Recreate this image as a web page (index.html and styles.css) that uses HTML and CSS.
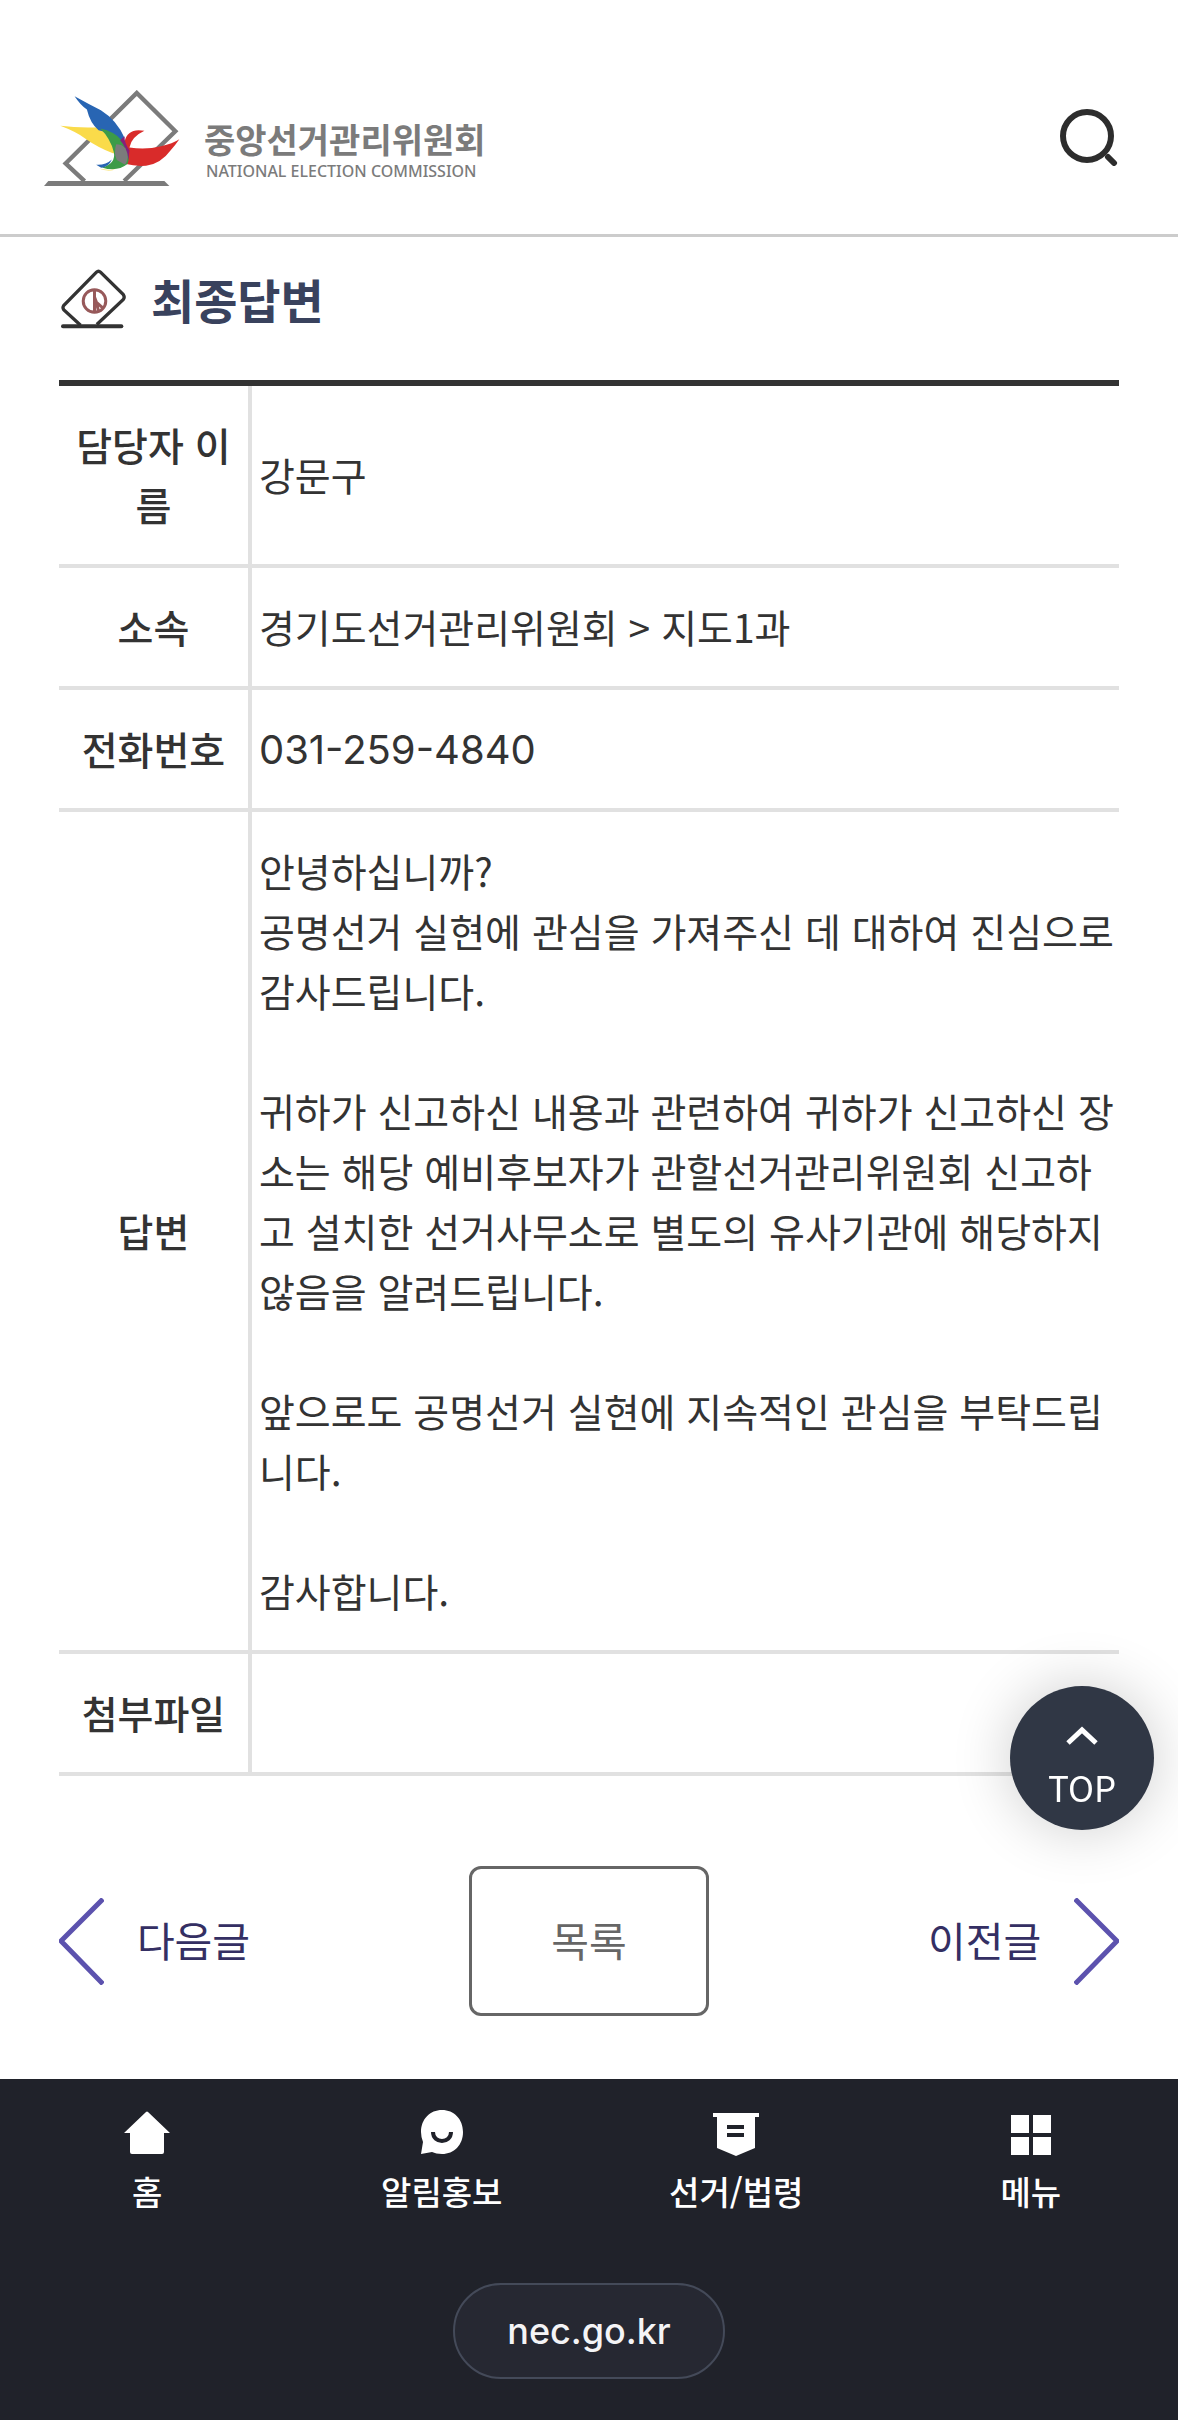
FILE: index.html
```html
<!DOCTYPE html>
<html lang="ko">
  <head>
    <meta charset="UTF-8" />
    <meta name="viewport" content="width=device-width, initial-scale=1.0" />
    <title>최종답변 - 중앙선거관리위원회</title>
    <link rel="stylesheet" href="styles.css">
  </head>
  <body>
    <header class="header">
      <a class="logo" href="#">
        <svg class="logo-mark" viewBox="40 60 415 290" aria-hidden="true">
          <path d="M165 333 L108 280 L322 68 L438 183 L284 333" fill="none" stroke="#7b7b7b" stroke-width="13" />
          <path d="M43 348 L56 333 H405 L420 348 Z" fill="#7b7b7b" />
          <path d="M92 167 Q150 174 212 171 L262 235 L252 250 Q205 232 170 207 Q140 185 92 167 Z" fill="#fadb4a" />
          <path d="M135 78 Q178 102 214 120 Q262 150 285 203 L276 218 Q245 185 207 180 Q182 160 172 118 Q152 104 135 78 Z" fill="#2865b3" />
          <path d="M345 182 Q306 200 300 232 Q350 240 395 228 Q430 220 450 207 Q437 226 424 240 Q395 280 350 287 Q315 289 290 282 L285 215 Q295 172 345 182 Z" fill="#d92b2a" />
          <path d="M212 175 Q255 184 276 210 Q307 250 294 282 Q262 307 217 292 Q260 280 253 246 Q243 205 212 175 Z" fill="#3c9b48" />
          <path d="M200 284 Q228 286 247 268 Q238 290 215 293 Z" fill="#2865b3" />
          <path d="M208 295 Q235 302 258 298 Q235 306 208 295 Z" fill="#fadb4a" />
          <path d="M272 210 L285 198 Q285 220 300 240 L297 270 Q292 232 272 210 Z" fill="#86207b" />
          <path d="M260 222 Q252 248 262 270 L287 284 Q302 262 288 235 Q278 222 260 222 Z" fill="#7b7b7b" />
        </svg>
        <span class="logo-text">
          <span class="logo-ko">중앙선거관리위원회</span>
          <span class="logo-en">NATIONAL ELECTION COMMISSION</span>
        </span>
      </a>
      <button class="search-button" type="button" aria-label="검색">
        <svg viewBox="0 0 58 58" aria-hidden="true">
          <circle cx="27" cy="28" r="24" fill="none" stroke="#2d2d2d" stroke-width="6" />
          <path d="M48 49 L54 55" stroke="#2d2d2d" stroke-width="6" stroke-linecap="round" />
        </svg>
      </button>
    </header>

    <main class="container">
      <div class="title-row">
        <svg class="title-icon" viewBox="93 55 196 180" aria-hidden="true">
          <path d="M152 224 L101 177 Q97 171 101 165 L200 64 Q206 58 212 64 L281 132 Q286 139 281 146 L201 222" fill="none" stroke="#333" stroke-width="10" />
          <path d="M99 227 H275" stroke="#333" stroke-width="12" stroke-linecap="round" />
          <g fill="none" stroke="#97595a" stroke-width="9">
            <circle cx="194" cy="151" r="34" />
            <path d="M194 117 V185 M194 139 L200 155 L219 172 M200 155 L206 182" />
          </g>
        </svg>
        <h1 class="title">최종답변</h1>
      </div>

      <table class="answer-table">
        <tr>
          <th scope="row">담당자 이름</th>
          <td>강문구</td>
        </tr>
        <tr>
          <th scope="row">소속</th>
          <td>경기도선거관리위원회 &gt; 지도1과</td>
        </tr>
        <tr>
          <th scope="row">전화번호</th>
          <td class="phone">031-259-4840</td>
        </tr>
        <tr>
          <th scope="row">답변</th>
          <td>
            안녕하십니까?<br>
            공명선거 실현에 관심을 가져주신 데 대하여 진심으로 감사드립니다.<br>
            <br>
            귀하가 신고하신 내용과 관련하여 귀하가 신고하신 장소는 해당 예비후보자가 관할선거관리위원회 신고하고 설치한 선거사무소로 별도의 유사기관에 해당하지 않음을 알려드립니다.<br>
            <br>
            앞으로도 공명선거 실현에 지속적인 관심을 부탁드립니다.<br>
            <br>
            감사합니다.
          </td>
        </tr>
        <tr>
          <th scope="row">첨부파일</th>
          <td></td>
        </tr>
      </table>

      <nav class="pager" aria-label="글 이동">
        <a class="pager-link" href="#">
          <svg viewBox="0 0 45 87" aria-hidden="true"><path d="M44 1 L2 43 L44 86" /></svg>
          <span>다음글</span>
        </a>
        <button class="list-button" type="button">목록</button>
        <a class="pager-link next" href="#">
          <span>이전글</span>
          <svg viewBox="0 0 45 87" aria-hidden="true"><path d="M1 1 L43 43 L1 86" /></svg>
        </a>
      </nav>
    </main>

    <button class="top-button" type="button">
      <svg viewBox="0 0 32 20" aria-hidden="true"><path d="M2 17 L16 4 L30 17" /></svg>
      TOP
    </button>

    <footer class="bottom">
      <nav class="tabs" aria-label="하단 메뉴">
        <a class="tab" href="#">
          <svg viewBox="0 0 48 48" aria-hidden="true">
            <path d="M23 4 Q24 3 25 4 L47 25 H41 V44 Q41 46 39 46 H9 Q7 46 7 44 V25 H1 Z" fill="#fff" />
          </svg>
          홈
        </a>
        <a class="tab" href="#">
          <svg viewBox="0 0 48 48" aria-hidden="true">
            <path d="M24 2 C36 2 45 11 45 24 C45 37 36 46 24 46 Q18 46 14 44 L3 46 L5 34 Q3 29 3 24 C3 11 12 2 24 2 Z" fill="#fff" />
            <path d="M15 24 C15 36 33 36 33 24" fill="none" stroke="#20222a" stroke-width="4" />
          </svg>
          알림홍보
        </a>
        <a class="tab" href="#">
          <svg viewBox="0 0 48 48" aria-hidden="true">
            <path d="M1 5 H47 V9 H43 V40 L24 48 L5 40 V9 H1 Z" fill="#fff" />
            <path d="M15 19 H32 M15 27 H32" stroke="#20222a" stroke-width="4" />
          </svg>
          선거/법령
        </a>
        <a class="tab" href="#">
          <svg viewBox="0 0 48 48" aria-hidden="true">
            <path d="M4 7 H22 V25 H4 Z M26 7 H44 V25 H26 Z M4 29 H22 V47 H4 Z M26 29 H44 V47 H26 Z" fill="#fff" />
          </svg>
          메뉴
        </a>
      </nav>
      <a class="address" href="#">nec.go.kr</a>
    </footer>
  </body>
</html>
```

FILE: styles.css
```css
* {
  box-sizing: border-box;
}

body {
  margin: 0;
  background-color: #fff;
  color: #333;
  font-family: "Noto Sans CJK KR", sans-serif;
  font-size: 39px;
  line-height: 60px;
}

a {
  color: inherit;
  text-decoration: none;
}

button {
  padding: 0;
  border: none;
  background: none;
  font-family: inherit;
  cursor: pointer;
}

svg {
  display: block;
  flex: none;
}

.header {
  display: flex;
  align-items: flex-start;
  justify-content: space-between;
  padding: 90px 60px 47px 43px;
  border-bottom: 3px solid #ccc;
}

.logo {
  display: flex;
  gap: 23px;
  color: #7b7b7b;
}

.logo-mark {
  width: 138px;
  height: 97px;
}

.logo-text {
  display: flex;
  flex-direction: column;
  padding-top: 28px;
}

.logo-ko {
  font-size: 34px;
  font-weight: bold;
  line-height: 42px;
}

.logo-en {
  padding-left: 2px;
  font-family: "Noto Sans", sans-serif;
  font-size: 16px;
  font-weight: 500;
  line-height: 22px;
}

.search-button {
  margin-top: 18px;
}

.search-button svg {
  width: 58px;
  height: 58px;
}

.container {
  padding: 0 5%;
}

.title-row {
  display: flex;
  align-items: center;
  gap: 25px;
  padding: 32px 2px 51px;
}

.title-icon {
  width: 65px;
  height: 60px;
}

.title {
  margin: 0;
  color: #39425d;
  font-size: 47px;
  font-weight: bold;
  line-height: 60px;
}

.answer-table {
  width: 100%;
  border-top: 6px solid #333;
  border-collapse: separate;
  border-spacing: 0;
}

.answer-table th,
.answer-table td {
  height: 122px;
  padding: 28px 7px 30px;
  border-bottom: 4px solid #e1e1e1;
  vertical-align: middle;
}

.answer-table th {
  width: 193px;
  border-right: 4px solid #e1e1e1;
  font-weight: 500;
  text-align: center;
}

.answer-table td {
  padding-right: 0;
}

.answer-table .phone {
  padding-top: 30px;
  padding-bottom: 28px;
  font-family: Inter, sans-serif;
  font-size: 40px;
}

.pager {
  display: grid;
  grid-template-columns: 1fr auto 1fr;
  align-items: center;
  padding: 90px 0 63px;
}

.pager-link {
  display: flex;
  align-items: center;
  gap: 33px;
  color: #342f63;
  font-size: 41px;
}

.pager-link.next {
  justify-content: flex-end;
}

.pager-link span {
  padding-bottom: 5px;
}

.pager-link svg {
  width: 45px;
  height: 87px;
  fill: none;
  stroke: #5c52ae;
  stroke-width: 5;
}

.list-button {
  width: 240px;
  height: 150px;
  padding-bottom: 5px;
  border: 3px solid #666;
  border-radius: 12px;
  color: #666;
  font-size: 41px;
}

/* stays above the tab bar while the page scrolls */
.top-button {
  position: fixed;
  right: 24px;
  bottom: 590px;
  display: flex;
  flex-direction: column;
  align-items: center;
  justify-content: center;
  gap: 21px;
  width: 144px;
  height: 144px;
  padding-top: 17px;
  border-radius: 50%;
  background-color: #303745;
  box-shadow: 0 0 60px rgba(0, 0, 0, 0.2);
  color: #fff;
  font-size: 35px;
  line-height: 40px;
}

.top-button svg {
  width: 32px;
  height: 20px;
  fill: none;
  stroke: #fff;
  stroke-width: 5;
}

.bottom {
  display: flex;
  flex-direction: column;
  align-items: center;
  gap: 67px;
  padding: 29px 0 41px;
  background-color: #20222a;
  color: #fff;
}

.tabs {
  display: grid;
  grid-template-columns: repeat(4, 1fr);
  width: 100%;
}

.tab {
  display: flex;
  flex-direction: column;
  align-items: center;
  gap: 10px;
  font-size: 33px;
  font-weight: 500;
  line-height: 50px;
}

.tab svg {
  width: 48px;
  height: 48px;
}

.address {
  width: 272px;
  height: 96px;
  border: 2px solid #444a59;
  border-radius: 48px;
  background-color: #262832;
  color: #f4f4f6;
  font-family: Inter, sans-serif;
  font-size: 36px;
  font-weight: 500;
  line-height: 92px;
  text-align: center;
}
```
